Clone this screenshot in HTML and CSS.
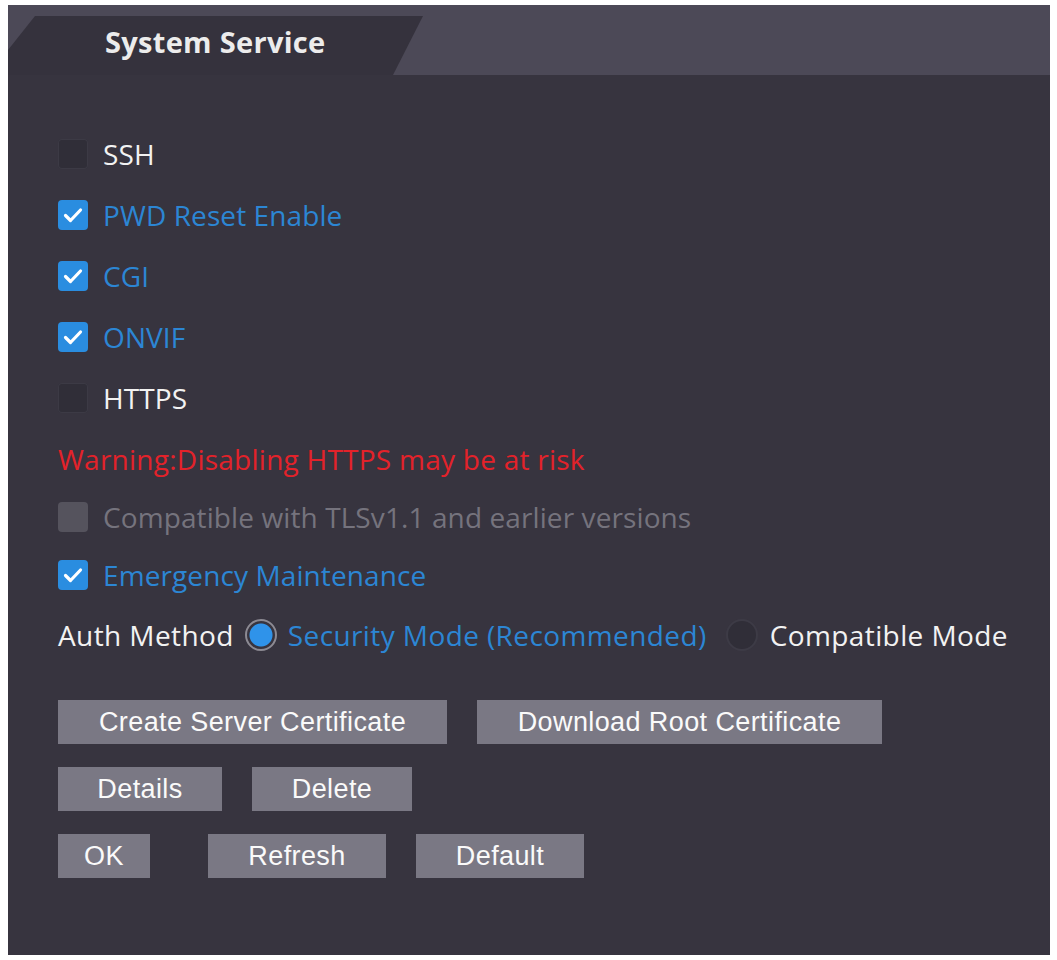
FILE: index.html
```html
<!DOCTYPE html>
<html>
<head>
<meta charset="utf-8">
<link rel="stylesheet" href="styles.css">
</head>
<body>
<div class="panel">
  <div class="tabbar">
    <div class="tab">System Service</div>
  </div>
  <div class="content">
    <div class="row r61"><span class="cb"></span><span class="lbl">SSH</span></div>
    <div class="row r61"><span class="cb on"><svg viewBox="0 0 30 30"><path d="M7.5 15.5 L12.5 20.5 L22.5 10" /></svg></span><span class="lbl blue">PWD Reset Enable</span></div>
    <div class="row r61"><span class="cb on"><svg viewBox="0 0 30 30"><path d="M7.5 15.5 L12.5 20.5 L22.5 10" /></svg></span><span class="lbl blue">CGI</span></div>
    <div class="row r61"><span class="cb on"><svg viewBox="0 0 30 30"><path d="M7.5 15.5 L12.5 20.5 L22.5 10" /></svg></span><span class="lbl blue">ONVIF</span></div>
    <div class="row r61"><span class="cb"></span><span class="lbl">HTTPS</span></div>
    <div class="row r61"><span class="warn">Warning:Disabling HTTPS may be at risk</span></div>
    <div class="row r56"><span class="cb dis"></span><span class="lbl grey">Compatible with TLSv1.1 and earlier versions</span></div>
    <div class="row r60"><span class="cb on"><svg viewBox="0 0 30 30"><path d="M7.5 15.5 L12.5 20.5 L22.5 10" /></svg></span><span class="lbl blue">Emergency Maintenance</span></div>
    <div class="row r60 auth">
      <span class="lbl plain">Auth Method</span>
      <span class="radio on"></span><span class="lbl blue">Security Mode (Recommended)</span>
      <span class="radio"></span><span class="lbl">Compatible Mode</span>
    </div>
    <div class="buttons">
      <div class="btnrow">
        <button class="btn w389">Create Server Certificate</button>
        <button class="btn w405">Download Root Certificate</button>
      </div>
      <div class="btnrow">
        <button class="btn w164">Details</button>
        <button class="btn w160">Delete</button>
      </div>
      <div class="btnrow">
        <button class="btn w92 gap-wide">OK</button>
        <button class="btn w178">Refresh</button>
        <button class="btn w168">Default</button>
      </div>
    </div>
  </div>
</div>
</body>
</html>
```
FILE: styles.css
```css
html, body {
  margin: 0;
  padding: 0;
  background: #ffffff;
}
body {
  padding: 5px 7px 5px 8px;
  font-family: "Open Sans", "Noto Sans", sans-serif;
}
.panel {
  width: 1042px;
  height: 950px;
  background: #37343f;
  display: flex;
  flex-direction: column;
}
.tabbar {
  height: 70px;
  background: #4c4957;
  display: flex;
  align-items: flex-end;
  flex: none;
}
.tab {
  width: 415px;
  height: 59px;
  background: #35323d;
  clip-path: polygon(27px 0, 415px 0, 385px 59px, 0 59px, 0 34px);
  color: #ececec;
  font-weight: 700;
  font-size: 29px;
  padding-left: 97px;
  box-sizing: border-box;
  line-height: 52px;
  letter-spacing: 0.3px;
}
.content {
  padding: 48px 0 0 50px;
  display: flex;
  flex-direction: column;
}
.row {
  display: flex;
  align-items: center;
  font-size: 28px;
  color: #f2f2f2;
}
.r61 { height: 61px; }
.r60 { height: 60px; }
.r56 { height: 56px; }
.cb {
  width: 30px;
  height: 30px;
  border-radius: 4px;
  background: #302e38;
  box-shadow: inset 0 0 0 1px #3c3a45;
  margin-right: 15px;
  flex: none;
  display: flex;
}
.cb svg {
  width: 30px;
  height: 30px;
}
.cb svg path {
  fill: none;
  stroke: #ffffff;
  stroke-width: 3.2;
  stroke-linecap: round;
  stroke-linejoin: round;
}
.cb.on {
  background: #2a8de0;
  box-shadow: none;
}
.cb.dis {
  background: #55535d;
  box-shadow: none;
}
.lbl {
  white-space: nowrap;
  letter-spacing: 0.1px;
}
.blue { color: #2c86d4; }
.grey { color: #75737d; }
.warn {
  color: #e3222a;
  white-space: nowrap;
  letter-spacing: 0.25px;
}
.auth .lbl { letter-spacing: 0.4px; }
.auth .plain { margin-right: 11px; }
.radio {
  width: 32px;
  height: 32px;
  border-radius: 50%;
  box-sizing: border-box;
  border: 2px solid #3d3b46;
  background: #302e38;
  margin-right: 11px;
  flex: none;
}
.radio.on {
  border: 2px solid #8c8a93;
  background: radial-gradient(circle, #2f93ea 0, #2f93ea 11px, #37343f 12px);
}
.lbl.blue + .radio { margin-left: 19px; margin-right: 12px; }
.buttons {
  margin-top: 35px;
  display: flex;
  flex-direction: column;
  gap: 23px;
}
.btnrow {
  display: flex;
  gap: 30px;
}
.btn {
  height: 44px;
  background: #7a7884;
  border: none;
  color: #fafafa;
  font-family: "Liberation Sans", Arial, sans-serif;
  font-size: 27px;
  padding: 0;
  letter-spacing: 0.4px;
}
.w389 { width: 389px; }
.w405 { width: 405px; }
.w164 { width: 164px; }
.w160 { width: 160px; }
.w92 { width: 92px; }
.w178 { width: 178px; }
.w168 { width: 168px; }
.gap-wide { margin-right: 28px; }
```
